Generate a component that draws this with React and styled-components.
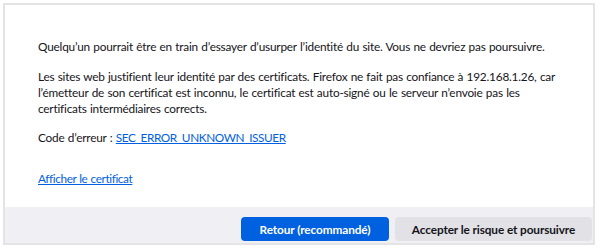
import styled, { createGlobalStyle } from 'styled-components'

const GlobalStyle = createGlobalStyle`
  html, body {
    margin: 0;
    padding: 0;
    background: #ffffff;
  }
  body {
    font-family: Lato, "Open Sans", "Liberation Sans", sans-serif;
    color: #15141a;
  }
`

const Card = styled.div`
  margin: 3px 5px 4px 3px;
  height: 242px;
  border: 2px solid #e4e4e6;
  background: #ffffff;
  display: flex;
  flex-direction: column;
  box-sizing: border-box;
`

const Body = styled.div`
  flex: 1;
  min-height: 0;
  overflow: hidden;
  padding: 34px 30px 0 33px;
  font-size: 11.8px;
  letter-spacing: -0.2px;
  word-spacing: 0.5px;
  line-height: 16px;
`

const Para = styled.p`
  margin: 0 0 ${(p) => p.gap || 14}px;
`

const Link = styled.a`
  color: #0061e0;
  text-decoration: underline;
  letter-spacing: -0.4px;
  cursor: pointer;
`

const Footer = styled.div`
  background: #f0f0f4;
  height: 34px;
  flex-shrink: 0;
  display: flex;
  justify-content: flex-end;
  align-items: flex-end;
  gap: 6px;
  padding: 0 1px 2px 0;
`

const Button = styled.button`
  height: 24px;
  border: none;
  border-radius: 4px;
  padding: 0;
  width: ${(p) => p.w}px;
  font-family: inherit;
  font-size: 11.8px;
  font-weight: 700;
  letter-spacing: -0.1px;
  cursor: pointer;
  background: ${(p) => (p.primary ? '#0061e0' : '#e2e2e6')};
  color: ${(p) => (p.primary ? '#ffffff' : '#15141a')};
`

function App() {
  return (
    <>
      <GlobalStyle />
      <Card>
        <Body>
          <Para>
            Quelqu’un pourrait être en train d’essayer d’usurper l’identité du site. Vous ne devriez pas poursuivre.
          </Para>
          <Para gap={13}>
            Les sites web justifient leur identité par des certificats. Firefox ne fait pas confiance à 192.168.1.26, car l’émetteur de son certificat est inconnu, le certificat est auto-signé ou le serveur n’envoie pas les certificats intermédiaires corrects.
          </Para>
          <Para gap={25}>
            Code d’erreur : <Link>SEC_ERROR_UNKNOWN_ISSUER</Link>
          </Para>
          <Para>
            <Link>Afficher le certificat</Link>
          </Para>
        </Body>
        <Footer>
          <Button primary w={148}>Retour (recommandé)</Button>
          <Button w={197}>Accepter le risque et poursuivre</Button>
        </Footer>
      </Card>
    </>
  )
}

export default App
